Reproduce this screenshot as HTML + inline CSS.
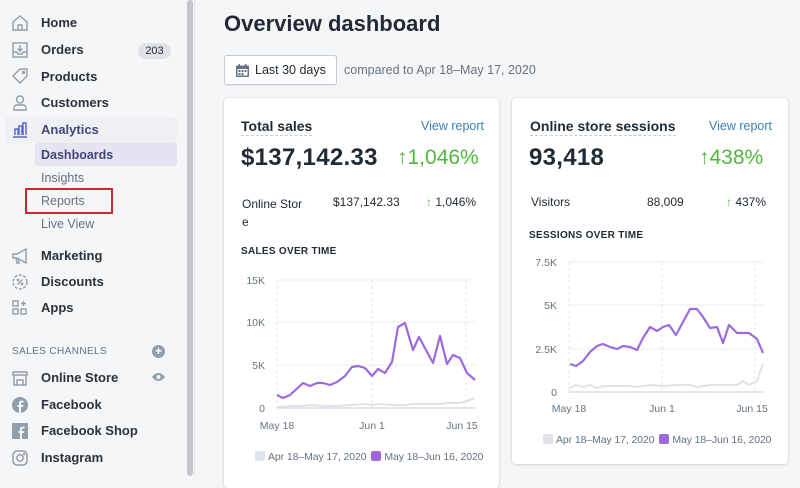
<!DOCTYPE html>
<html><head><meta charset="utf-8"><style>
*{margin:0;padding:0;box-sizing:border-box}
body{width:800px;height:476px;overflow:hidden;background:#f4f6f8;font-family:"Liberation Sans",sans-serif;color:#212b36;position:relative}
.sb{position:absolute;left:0;top:0;width:186px;height:476px;background:#f4f6f8}
.scroll{position:absolute;left:187px;top:0;width:6px;height:476px;background:#c4c6c9;border-radius:3px}
.sepr{position:absolute;left:194px;top:0;width:1px;height:476px;background:#e3e5e8}
.it{position:absolute;left:41px;font-size:13px;font-weight:bold;color:#2a333d;line-height:16px}
.sub{position:absolute;left:41px;font-size:12.5px;color:#637381;line-height:16px}
.ic{position:absolute;left:10px;width:20px;height:20px}
.card{position:absolute;background:#fff;border-radius:4px;box-shadow:0 0 0 1px rgba(63,63,68,.05),0 1px 3px rgba(63,63,68,.15)}
.t{position:absolute;font-size:14px;font-weight:bold;border-bottom:1px dashed #c4cdd5;line-height:17px}
.vr{position:absolute;font-size:12.5px;color:#3d7fb8}
.big{position:absolute;font-size:24px;font-weight:bold;letter-spacing:.3px}
.pct{position:absolute;font-size:21px;color:#50b83c}
.sm{position:absolute;font-size:12px;color:#212b36}
.cap{position:absolute;font-size:10px;font-weight:bold;letter-spacing:.3px;color:#212b36}
.ax{font-family:"Liberation Sans",sans-serif;font-size:10.5px;fill:#637381}
.lg{position:absolute;font-size:10.5px;color:#637381;white-space:nowrap;letter-spacing:-.1px}
.sw{display:inline-block;width:10px;height:10px;border-radius:2px;vertical-align:-1px;margin-right:3px}
</style></head><body>
<div class="sb">
<div style="position:absolute;left:5px;top:117px;width:172px;height:26px;background:#eef0f3;border-radius:3px"></div>
<div style="position:absolute;left:35px;top:143px;width:142px;height:23px;background:#e4e5f0;border-radius:3px"></div>
<svg class="ic" style="top:13px" viewBox="0 0 20 20" fill="none" stroke="#919eab" stroke-width="1.4"><path d="M3 9L10 3l7 6v8H3z"/><path d="M8 17v-5h4v5"/></svg>
<div class="it" style="top:15px">Home</div>
<svg class="ic" style="top:40px" viewBox="0 0 20 20" fill="none" stroke="#919eab" stroke-width="1.4"><rect x="3" y="3" width="14" height="14"/><path d="M3 12h4l1 2h4l1-2h4M10 5v6M7.5 8.5L10 11l2.5-2.5"/></svg>
<div class="it" style="top:42px">Orders</div>
<div style="position:absolute;left:138px;top:43px;width:33px;height:16px;border-radius:8px;background:#dfe3e8;font-size:11px;text-align:center;line-height:16px;color:#212b36">203</div>
<svg class="ic" style="top:66px" viewBox="0 0 20 20" fill="none" stroke="#919eab" stroke-width="1.4"><path d="M10 3h7v7l-7 7-7-7z"/><circle cx="13.5" cy="6.5" r="1"/></svg>
<div class="it" style="top:69px">Products</div>
<svg class="ic" style="top:93px" viewBox="0 0 20 20" fill="none" stroke="#919eab" stroke-width="1.4"><circle cx="10" cy="6.5" r="3.5"/><path d="M4 17v-2a3 3 0 013-3h6a3 3 0 013 3v2z"/></svg>
<div class="it" style="top:95px">Customers</div>
<svg class="ic" style="top:120px" viewBox="0 0 20 20" fill="none" stroke="#5c6ac4" stroke-width="1.5"><path d="M3 17h14M5 15V9h3v6M9 15V6h3v9M13 15V3h3v12"/></svg>
<div class="it" style="top:122px;color:#43467f">Analytics</div>
<div class="it" style="top:147px;color:#43467f;font-size:12.5px">Dashboards</div>
<div class="sub" style="top:170px">Insights</div>
<div class="sub" style="top:193px">Reports</div>
<div style="position:absolute;left:25px;top:188px;width:88px;height:26px;border:2px solid #d0262b"></div>
<div class="sub" style="top:216px">Live View</div>
<svg class="ic" style="top:246px" viewBox="0 0 20 20" fill="none" stroke="#919eab" stroke-width="1.4"><path d="M3 8h4l9-5v14l-9-5H3zM6 12l1 5h2l-1-5"/></svg>
<div class="it" style="top:248px">Marketing</div>
<svg class="ic" style="top:272px" viewBox="0 0 20 20" fill="none" stroke="#919eab" stroke-width="1.4"><circle cx="10" cy="10" r="7" stroke-dasharray="3 1.5"/><path d="M7.5 12.5l5-5"/><circle cx="8" cy="8" r=".7"/><circle cx="12" cy="12" r=".7"/></svg>
<div class="it" style="top:274px">Discounts</div>
<svg class="ic" style="top:298px" viewBox="0 0 20 20" fill="none" stroke="#919eab" stroke-width="1.4"><rect x="3" y="3" width="5" height="5"/><rect x="3" y="11" width="5" height="5"/><rect x="11" y="11" width="5" height="5"/><path d="M13.5 3v5M11 5.5h5"/></svg>
<div class="it" style="top:300px">Apps</div>
<div style="position:absolute;left:12px;top:346px;font-size:10px;color:#637381;letter-spacing:.4px">SALES CHANNELS</div>
<div style="position:absolute;left:152px;top:345px;width:13px;height:13px;border-radius:50%;background:#919eab;color:#fff;font-size:12px;line-height:13px;text-align:center;font-weight:bold">+</div>
<svg class="ic" style="top:368px" viewBox="0 0 20 20" fill="none" stroke="#919eab" stroke-width="1.4"><path d="M3 4h14v3H3zM4 7v10h12V7M7 17v-5h6v5"/></svg>
<div class="it" style="top:370px">Online Store</div>
<svg style="position:absolute;left:151px;top:371px" width="15" height="12" viewBox="0 0 15 12"><path d="M1 6q6.5-8 13 0q-6.5 8-13 0z" fill="#919eab"/><circle cx="7.5" cy="6" r="2" fill="#f4f6f8"/></svg>
<svg class="ic" style="top:395px" viewBox="0 0 20 20"><circle cx="10" cy="10" r="8" fill="#919eab"/><path d="M11 18v-6h2l.4-2H11V8.5c0-.7.3-1 1-1h1.5V5.6H11.6c-2 0-2.6 1.2-2.6 2.6V10H7.5v2H9v6z" fill="#f4f6f8"/></svg>
<div class="it" style="top:397px">Facebook</div>
<svg class="ic" style="top:421px" viewBox="0 0 20 20"><rect x="2" y="2" width="16" height="16" rx="1" fill="#919eab"/><path d="M12 18v-6h2l.4-2H12V8.5c0-.7.3-1 1-1h1.5V5.6H12.6c-2 0-2.6 1.2-2.6 2.6V10H8.5v2H10v6z" fill="#f4f6f8"/></svg>
<div class="it" style="top:423px">Facebook Shop</div>
<svg class="ic" style="top:448px" viewBox="0 0 20 20" fill="none" stroke="#919eab" stroke-width="1.5"><rect x="3" y="3" width="14" height="14" rx="4"/><circle cx="10" cy="10" r="3.2"/><circle cx="14" cy="6" r=".5"/></svg>
<div class="it" style="top:450px">Instagram</div>
</div>
<div class="scroll"></div><div class="sepr"></div>

<div style="position:absolute;left:224px;top:11px;font-size:22px;font-weight:bold;color:#212b36">Overview dashboard</div>
<div style="position:absolute;left:224px;top:55px;width:113px;height:30px;background:#fff;border:1px solid #c4cdd5;border-radius:3px;box-shadow:0 1px 0 rgba(22,29,37,.05)">
<svg style="position:absolute;left:11px;top:8px" width="13" height="13" viewBox="0 0 13 13"><rect x="0" y="1.5" width="13" height="11.5" rx="1" fill="#637381"/><rect x="1.5" y="5" width="10" height="6.5" fill="#fff"/><g fill="#637381"><rect x="2.5" y="6" width="2" height="2"/><rect x="5.5" y="6" width="2" height="2"/><rect x="8.5" y="6" width="2" height="2"/><rect x="2.5" y="9" width="2" height="2"/><rect x="5.5" y="9" width="2" height="2"/></g><rect x="2.5" y="0" width="1.5" height="3" fill="#637381"/><rect x="9" y="0" width="1.5" height="3" fill="#637381"/></svg>
<div style="position:absolute;left:30px;top:7px;font-size:12.5px;color:#212b36">Last 30 days</div></div>
<div style="position:absolute;left:344px;top:63px;font-size:12.5px;color:#637381">compared to Apr 18–May 17, 2020</div>

<div class="card" style="left:224px;top:98px;width:275px;height:390px">
<div class="t" style="left:17px;top:20px">Total sales</div>
<div class="vr" style="left:197px;top:21px">View report</div>
<div class="big" style="left:17px;top:46px">$137,142.33</div>
<div class="pct" style="left:173px;top:48px">↑1,046%</div>
<div class="sm" style="left:18px;top:97px;line-height:18px">Online Stor<br>e</div>
<div class="sm" style="left:109px;top:97px">$137,142.33</div>
<div class="sm" style="left:202px;top:97px"><span style="color:#50b83c">↑</span> 1,046%</div>
<div class="cap" style="left:17px;top:148px">SALES OVER TIME</div>
</div>
<div class="card" style="left:512px;top:98px;width:276px;height:366px">
<div class="t" style="left:18px;top:20px">Online store sessions</div>
<div class="vr" style="left:197px;top:21px">View report</div>
<div class="big" style="left:17px;top:46px">93,418</div>
<div class="pct" style="left:187px;top:48px">↑438%</div>
<div class="sm" style="left:19px;top:97px">Visitors</div>
<div class="sm" style="left:135px;top:97px">88,009</div>
<div class="sm" style="left:214px;top:97px"><span style="color:#50b83c">↑</span> 437%</div>
<div class="cap" style="left:17px;top:132px">SESSIONS OVER TIME</div>
</div>

<svg style="position:absolute;left:0;top:0" width="800" height="476">
<g stroke="#eceef1" stroke-width="1"><line x1="277" y1="280" x2="476" y2="280"/><line x1="277" y1="322" x2="476" y2="322"/><line x1="277" y1="365" x2="476" y2="365"/>
<line x1="569" y1="262" x2="764" y2="262"/><line x1="569" y1="305" x2="764" y2="305"/><line x1="569" y1="349" x2="764" y2="349"/></g>
<g stroke="#e4e6ea" stroke-dasharray="3 3"><line x1="277" y1="280" x2="277" y2="408"/><line x1="372" y1="280" x2="372" y2="408"/><line x1="466" y1="280" x2="466" y2="408"/>
<line x1="569" y1="262" x2="569" y2="392"/><line x1="662" y1="262" x2="662" y2="392"/><line x1="755" y1="262" x2="755" y2="392"/></g>
<g stroke="#c4cdd5"><line x1="277" y1="408" x2="476" y2="408"/><line x1="569" y1="392" x2="764" y2="392"/></g>
<g class="ax" text-anchor="end"><text x="265" y="284">15K</text><text x="265" y="326">10K</text><text x="265" y="369">5K</text><text x="265" y="412">0</text>
<text x="557" y="266">7.5K</text><text x="557" y="309">5K</text><text x="557" y="353">2.5K</text><text x="557" y="396">0</text></g>
<g class="ax" text-anchor="middle"><text x="277" y="429">May 18</text><text x="372" y="429">Jun 1</text><text x="462" y="429">Jun 15</text>
<text x="569" y="412">May 18</text><text x="662" y="412">Jun 1</text><text x="752" y="412">Jun 15</text></g>
<polyline fill="none" stroke="#dfe3e8" stroke-width="2" points="277,407 290,406 303,406 310,405 323,406 337,406 352,405 365,404 372,405 378,404 392,405 405,405 413,404 426,404 440,404 447,403 460,403 467,401 475,398"/>
<polyline fill="none" stroke="#9c6ade" stroke-width="2.2" stroke-linejoin="round" points="277,395 283,398 290,395 303,383 310,386 317,383 323,383 330,385 337,382 345,376 352,367 358,366 365,368 372,376 378,369 385,373 392,362 398,327 405,323 413,350 419,337 426,350 433,363 440,336 447,364 453,355 460,358 467,373 475,380"/>
<polyline fill="none" stroke="#dfe3e8" stroke-width="2" points="569,388 576,385 583,387 590,385 597,388 603,386 617,386 630,386 637,387 650,385 663,386 676,385 690,385 697,387 710,385 723,385 737,385 743,381 749,385 757,381 763,364"/>
<polyline fill="none" stroke="#9c6ade" stroke-width="2.2" stroke-linejoin="round" points="570,364 576,366 583,361 590,352 597,346 603,344 610,347 617,349 623,346 630,347 637,350 643,338 650,327 657,331 663,327 669,325 676,335 683,322 690,309 697,309 703,317 710,328 717,327 723,343 729,325 737,333 743,333 749,333 757,339 763,353"/>
</svg>
<div class="lg" style="left:255px;top:451px"><span class="sw" style="background:#dfe3e8"></span>Apr 18–May 17, 2020 <span class="sw" style="background:#9c6ade;margin-left:2px"></span>May 18–Jun 16, 2020</div>
<div class="lg" style="left:543px;top:434px"><span class="sw" style="background:#dfe3e8"></span>Apr 18–May 17, 2020 <span class="sw" style="background:#9c6ade;margin-left:2px"></span>May 18–Jun 16, 2020</div>
</body></html>
